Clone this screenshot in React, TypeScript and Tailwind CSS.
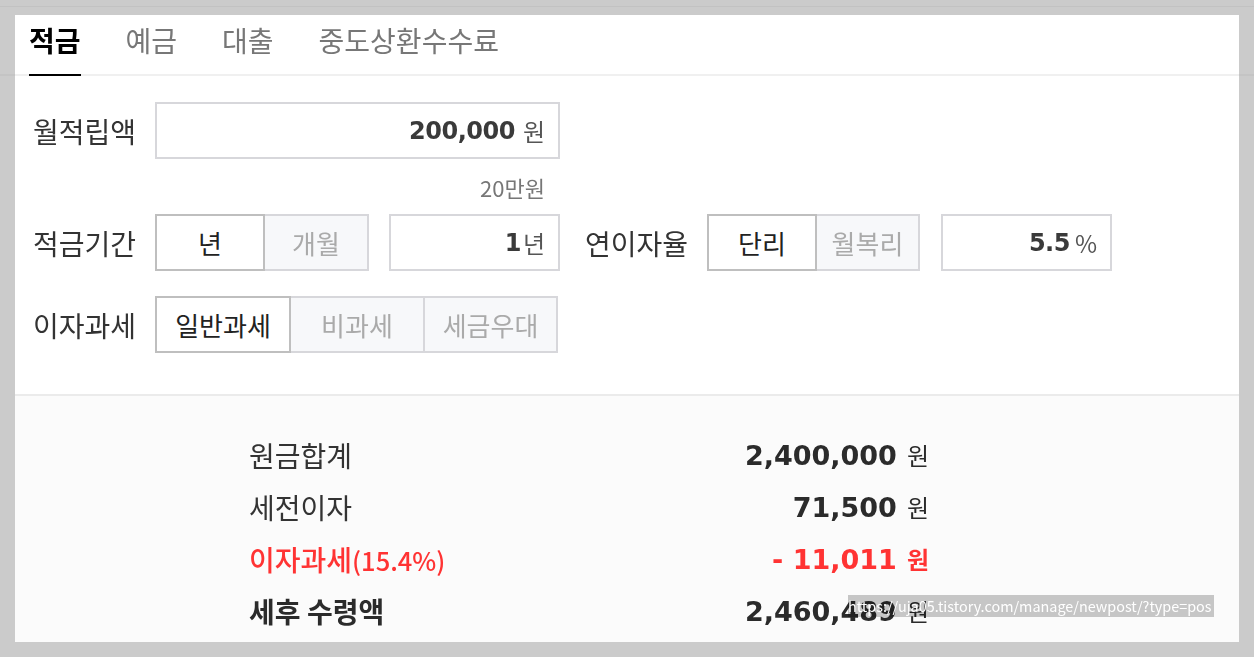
import React from 'react';

const NUM = "font-['DejaVu_Sans',sans-serif] font-bold";

const tabs = ['적금', '예금', '대출', '중도상환수수료'];

function Gutter() {
  return (
    <div className="flex w-[15px] flex-col">
      <div className="h-[59px]" />
      <div className="h-[2px] bg-[#c4c4c4]" />
    </div>
  );
}

function Tabs() {
  return (
    <div className="flex h-[61px] items-start gap-[45px] border-b-2 border-[#f0f0f0] pl-[14px]">
      {tabs.map((t, i) => (
        <div
          key={t}
          className={`flex h-[61px] items-center border-b-2 pb-[9px] text-[28px] leading-none ${
            i === 0 ? 'border-black font-bold text-black' : 'border-transparent text-[#777]'
          }`}
        >
          {t}
        </div>
      ))}
    </div>
  );
}

function Label({ children, className = '' }: { children: React.ReactNode; className?: string }) {
  return <div className={`w-[122px] text-[28px] leading-none text-[#333] ${className}`}>{children}</div>;
}

function ValueBox({
  value,
  unit,
  width,
  gap,
  className = '',
}: {
  value: string;
  unit: string;
  width: string;
  gap: string;
  className?: string;
}) {
  return (
    <div
      className={`flex h-[57px] items-center justify-end border-2 border-[#d7d7db] bg-white pr-[13px] ${width} ${className}`}
    >
      <span className={`${NUM} text-[24px] leading-none tracking-[-0.5px] text-[#3a3a3a]`}>{value}</span>
      <span className={`${gap} text-[24px] leading-none text-[#555]`}>{unit}</span>
    </div>
  );
}

function Segment({ items, widths, active }: { items: string[]; widths: string[]; active: number }) {
  return (
    <div className="flex">
      {items.map((it, i) => (
        <div
          key={it}
          className={`flex h-[57px] items-center justify-center border-2 text-[26px] leading-none ${widths[i]} ${
            i > 0 ? '-ml-[2px]' : ''
          } ${
            i === active
              ? 'relative z-10 border-[#bfbfbf] bg-white text-[#222]'
              : 'border-[#d7d7db] bg-[#f7f8fa] text-[#aaa]'
          }`}
        >
          {it}
        </div>
      ))}
    </div>
  );
}

function Form() {
  return (
    <div className="flex flex-col border-b-2 border-[#ebebeb] pb-[41px] pl-[18px] pt-[26px]">
      <div className="flex items-center">
        <Label>월적립액</Label>
        <ValueBox value="200,000" unit="원" width="w-[405px]" gap="ml-[8px]" />
      </div>
      <div className="flex h-[55px] w-[527px] items-center justify-end pr-[15px] text-[22px] leading-none text-[#777]">
        20만원
      </div>
      <div className="flex items-center">
        <Label>적금기간</Label>
        <Segment items={['년', '개월']} widths={['w-[110px]', 'w-[106px]']} active={0} />
        <ValueBox value="1" unit="년" width="w-[171px]" gap="ml-[2px]" className="ml-[20px]" />
        <Label className="ml-[25px]">연이자율</Label>
        <Segment items={['단리', '월복리']} widths={['w-[110px]', 'w-[105px]']} active={0} />
        <ValueBox value="5.5" unit="%" width="w-[171px]" gap="ml-[5px]" className="ml-[21px]" />
      </div>
      <div className="mt-[25px] flex items-center">
        <Label>이자과세</Label>
        <Segment
          items={['일반과세', '비과세', '세금우대']}
          widths={['w-[136px]', 'w-[136px]', 'w-[135px]']}
          active={0}
        />
      </div>
    </div>
  );
}

function ResultRow({
  label,
  note,
  value,
  tone = 'normal',
}: {
  label: string;
  note?: string;
  value: string;
  tone?: 'normal' | 'red' | 'total';
}) {
  const labelCls =
    tone === 'red'
      ? 'font-medium text-[#ff3333]'
      : tone === 'total'
        ? 'font-bold text-[#2b2b2b]'
        : 'text-[#333]';
  const valueCls = tone === 'red' ? 'text-[#ff3333]' : 'text-[#2b2b2b]';
  const unitCls = tone === 'red' ? 'font-bold text-[#ff3333]' : 'text-[#2b2b2b]';
  return (
    <div className="flex h-[52px] items-center justify-between">
      <div className={`text-[28px] leading-none ${labelCls}`}>
        {label}
        {note && <span className="text-[25.5px]">{note}</span>}
      </div>
      <div className="flex items-center">
        <span className={`${NUM} text-[27px] leading-none ${valueCls}`}>{value}</span>
        <span className={`ml-[10px] text-[24px] leading-none ${unitCls}`}>원</span>
      </div>
    </div>
  );
}

function Results() {
  return (
    <div className="flex-1 bg-[#fbfbfb] pl-[234px] pt-[33px]">
      <div className="flex w-[680px] flex-col">
        <ResultRow label="원금합계" value="2,400,000" />
        <ResultRow label="세전이자" value="71,500" />
        <ResultRow label="이자과세" note="(15.4%)" value="- 11,011" tone="red" />
        <ResultRow label="세후 수령액" value="2,460,489" tone="total" />
      </div>
    </div>
  );
}

function UrlHint() {
  return (
    <div className="absolute bottom-[25px] right-[25px] h-[22px] w-[366px] overflow-hidden">
      <div className="absolute inset-0 bg-[#c9c9c9] mix-blend-multiply" />
      <div className="relative whitespace-nowrap text-[14.4px] leading-[22px] text-white">
        https://uja05.tistory.com/manage/newpost/?type=pos
      </div>
    </div>
  );
}

export default function App() {
  return (
    <div className="min-h-screen w-full bg-[#cbcbcb] font-['Noto_Sans_CJK_KR',sans-serif]">
      <div className="h-[6px]" />
      <div className="h-[1px] bg-[#c2c2c2]" />
      <div className="h-[8px]" />
      <div className="flex">
        <Gutter />
        <div className="relative flex h-[627px] w-[1224px] flex-col bg-white">
          <Tabs />
          <Form />
          <Results />
          <UrlHint />
        </div>
        <Gutter />
      </div>
    </div>
  );
}
